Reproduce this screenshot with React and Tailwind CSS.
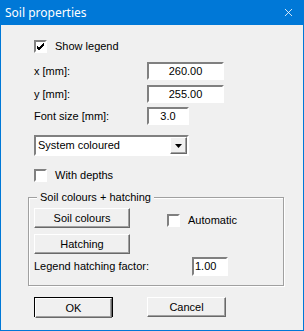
import { X } from "lucide-react";

const font = "font-['Liberation_Sans',Arial,sans-serif] text-[11px] text-black leading-none";
const sunken = "border-2 border-t-[#808080] border-l-[#808080] border-b-white border-r-white bg-white";
const raised = "border border-t-white border-l-white border-b-[#696969] border-r-[#696969] shadow-[inset_-1px_-1px_0_#a0a0a0] bg-[#f0f0f0]";

function CheckBox({ checked, label }) {
  return (
    <div className="flex items-center h-[13px]">
      <div className={`w-[13px] h-[13px] ${sunken} flex items-center justify-center`}>
        {checked && (
          <svg width="9" height="9" viewBox="0 0 9 9">
            <path d="M1 4 L3 6 L8 1 M1 5 L3 7 L8 2 M1 6 L3 8 L8 3" stroke="#000" strokeWidth="1" fill="none" />
          </svg>
        )}
      </div>
      <span className="ml-[8px]">{label}</span>
    </div>
  );
}

function Field({ label, value, width = "w-[77px]" }) {
  return (
    <div className="flex items-center h-[18px]">
      <span className="w-[113px]">{label}</span>
      <div className={`${width} h-[18px] ${sunken} flex items-center justify-center`}>{value}</div>
    </div>
  );
}

function Button({ children, className = "" }) {
  return (
    <div className={`h-[20px] ${raised} flex items-center justify-center ${className}`}>{children}</div>
  );
}

export default function App() {
  return (
    <div className={`w-[304px] h-[331px] bg-[#0078d7] flex flex-col px-px pb-px ${font}`}>
      <div className="h-[25px] flex items-center justify-between pl-[4px] pr-[8px]">
        <span className="text-white text-[12px] font-['Noto_Sans',sans-serif]">Soil properties</span>
        <X className="text-white w-[13px] h-[13px]" strokeWidth={1.5} />
      </div>
      <div className="flex-1 bg-[#f0f0f0] flex flex-col pl-[33px]">
        <div className="mt-[15px]">
          <CheckBox checked label="Show legend" />
        </div>
        <div className="mt-[9px]">
          <Field label="x [mm]:" value="260.00" />
        </div>
        <div className="mt-[5px]">
          <Field label="y [mm]:" value="255.00" />
        </div>
        <div className="mt-[4px]">
          <Field label="Font size [mm]:" value="3.0" width="w-[42px]" />
        </div>
        <div className={`mt-[10px] w-[155px] h-[21px] ${sunken} flex items-center justify-between`}>
          <span className="pl-[2px]">System coloured</span>
          <div className={`w-[17px] h-[17px] ${raised} flex items-center justify-center`}>
            <svg width="7" height="4" viewBox="0 0 7 4">
              <path d="M0 0 H7 L3.5 4 Z" fill="#000" />
            </svg>
          </div>
        </div>
        <div className="mt-[13px]">
          <CheckBox label="With depths" />
        </div>
        <div className="mt-[15px] -ml-[6px] w-[256px] relative border border-[#a0a0a0] shadow-[inset_1px_1px_0_#fff,1px_1px_0_#fff] pt-[10px] pb-[9px] pl-[5px] flex flex-col">
          <span className="absolute -top-[6px] left-[8px] bg-[#f0f0f0] px-[3px]">Soil colours + hatching</span>
          <div className="flex items-center">
            <Button className="w-[96px]">Soil colours</Button>
            <div className="ml-[37px] mt-[4px]">
              <CheckBox label="Automatic" />
            </div>
          </div>
          <Button className="w-[96px] mt-[6px]">Hatching</Button>
          <div className="mt-[3px] flex items-center">
            <span className="w-[158px]">Legend hatching factor:</span>
            <div className={`w-[36px] h-[19px] ${sunken} flex items-center pl-[1px]`}>1.00</div>
          </div>
        </div>
        <div className="mt-[11px] flex">
          <div className="w-[79px] h-[20px] border border-black">
            <Button className="h-[18px]">OK</Button>
          </div>
          <Button className="w-[79px] ml-[34px]">Cancel</Button>
        </div>
      </div>
    </div>
  );
}
